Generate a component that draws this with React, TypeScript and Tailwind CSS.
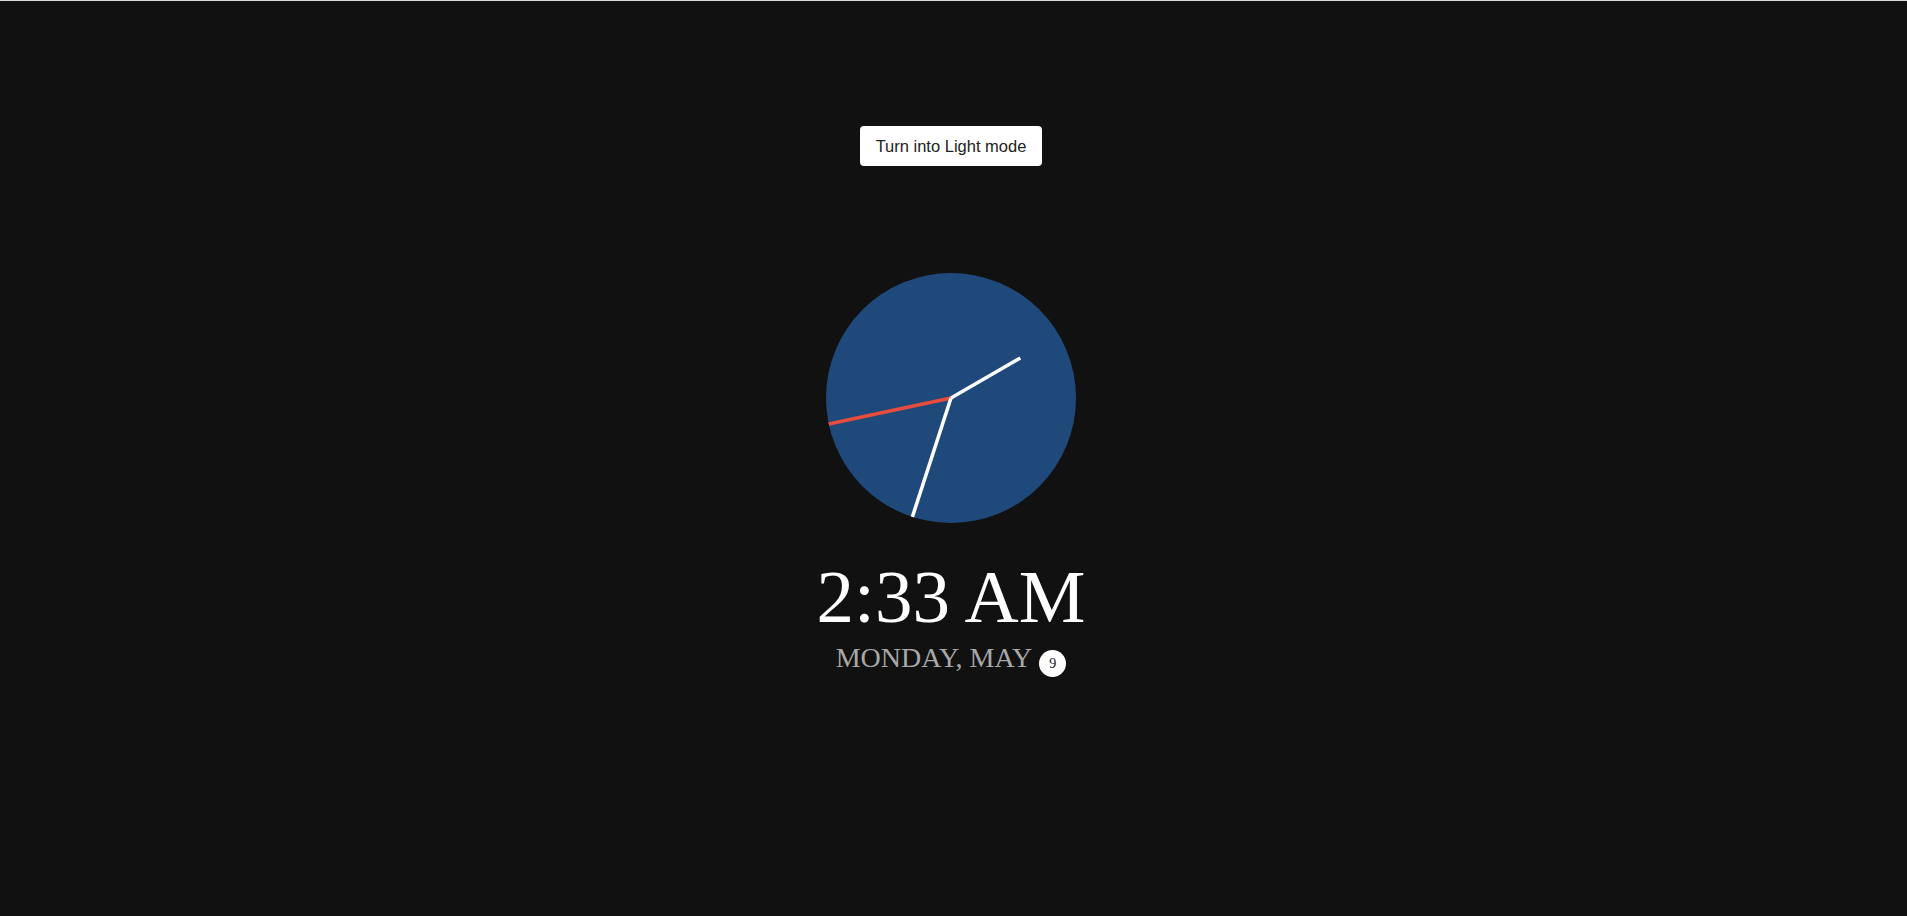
import React from "react";

function Clock() {
  const cx = 125, cy = 125;
  const hand = (deg: number, len: number) => {
    const r = (deg * Math.PI) / 180;
    return { x2: cx + len * Math.sin(r), y2: cy - len * Math.cos(r) };
  };
  const h = hand(60, 80);
  const m = hand(198, 125);
  const s = hand(258, 125);
  return (
    <svg width="250" height="250" viewBox="0 0 250 250" className="block">
      <circle cx="125" cy="125" r="125" fill="#1f497b" />
      <line x1={cx} y1={cy} {...s} stroke="#e74c3c" strokeWidth="3.5" />
      <line x1={cx} y1={cy} {...m} stroke="#ffffff" strokeWidth="3.5" />
      <line x1={cx} y1={cy} {...h} stroke="#ffffff" strokeWidth="3.5" />
    </svg>
  );
}

export default function App() {
  return (
    <div className="min-h-[916px] w-full bg-[#111111] border-t border-[#dcdcdc] flex flex-col items-center pr-[5px]">
      <button
        className="mt-[125px] h-[40px] px-[16px] bg-white rounded-[4px] text-[#222] text-[16.5px] leading-none"
        style={{ fontFamily: '"Liberation Sans", Arial, sans-serif' }}
      >
        Turn into Light mode
      </button>
      <div className="mt-[107px]">
        <Clock />
      </div>
      <div
        className="mt-[36px] text-white text-[75px] leading-none"
        style={{ fontFamily: '"Liberation Serif", "Times New Roman", serif' }}
      >
        2:33 AM
      </div>
      <div
        className="mt-[10px] flex items-start text-[#a8a8a8] text-[28px] leading-none"
        style={{ fontFamily: '"Liberation Serif", "Times New Roman", serif' }}
      >
        <span>MONDAY, MAY</span>
        <span className="ml-[7px] mt-[6px] w-[27px] h-[27px] rounded-full bg-white text-[#111] text-[14px] flex items-center justify-center">
          9
        </span>
      </div>
    </div>
  );
}
